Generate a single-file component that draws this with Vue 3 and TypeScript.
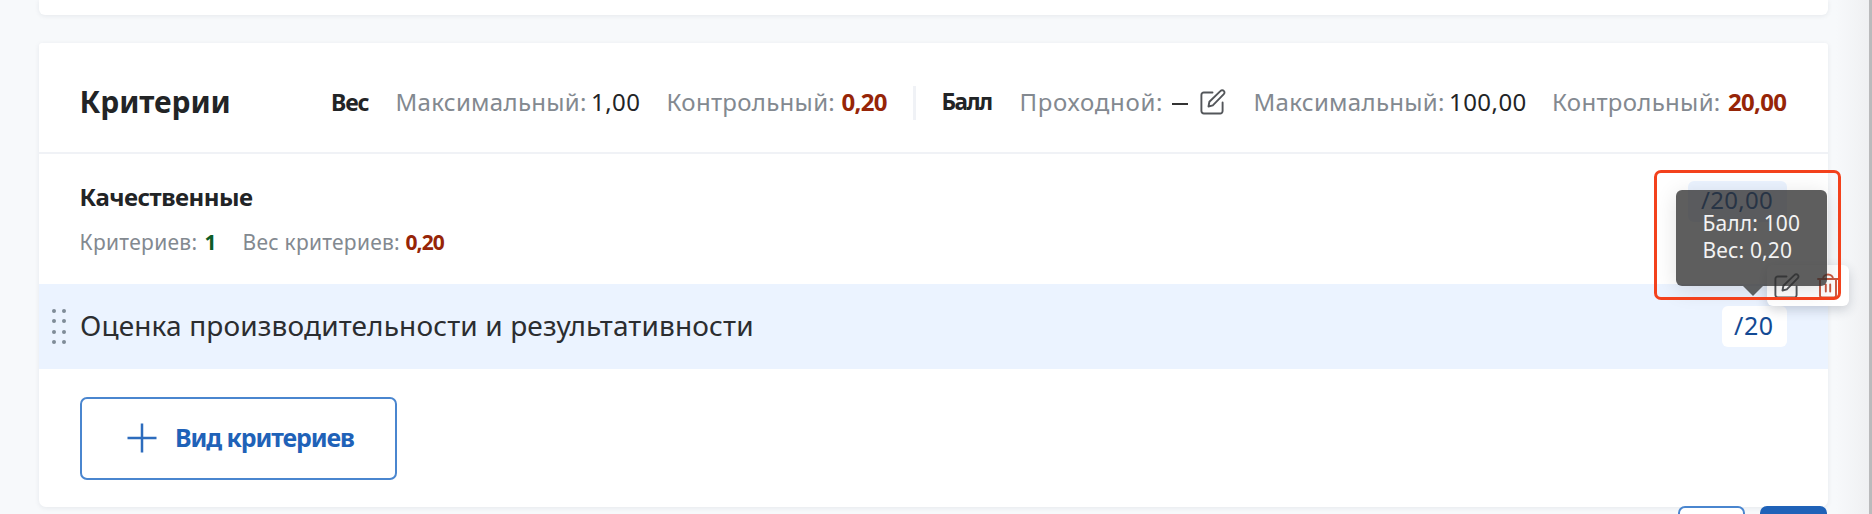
<script setup lang="ts">
interface Cell {
  text: string
  kind: string
}

const weight: Cell[] = [
  { text: 'Вес', kind: 'name name-weight' },
  { text: 'Максимальный:', kind: 'label' },
  { text: '1,00', kind: 'value' },
  { text: 'Контрольный:', kind: 'label' },
  { text: '0,20', kind: 'value alert' },
]
const scoreStart: Cell[] = [
  { text: 'Балл', kind: 'name name-score' },
  { text: 'Проходной:', kind: 'label wide' },
]
const scoreEnd: Cell[] = [
  { text: 'Максимальный:', kind: 'label' },
  { text: '100,00', kind: 'value' },
  { text: 'Контрольный:', kind: 'label' },
  { text: '20,00', kind: 'value alert' },
]
const grip: number[] = [0, 1, 2, 3, 4, 5, 6, 7]
</script>

<template>
  <div class="page">
    <section class="card previous"></section>

    <section class="card main">
      <header class="head">
        <h1 class="title">Критерии</h1>
        <span v-for="(c, i) in weight" :key="'w' + i" :class="c.kind">{{ c.text }}</span>
        <i class="divider"></i>
        <span v-for="(c, i) in scoreStart" :key="'s' + i" :class="c.kind">{{ c.text }}</span>
        <i class="dash"></i>
        <svg class="icon" viewBox="0 0 26 26">
          <path d="M12.500 3.500H3.800A2.400 2.400 0 0 0 1.400 5.900V22.100A2.400 2.400 0 0 0 3.800 24.500H20.200A2.400 2.400 0 0 0 22.600 22.100V13.500" />
          <path d="M8.500 17.500L9.400 12.800L20.600 1.900a2.200 2.200 0 0 1 3.200 0a2.200 2.200 0 0 1 0 3.200L12.800 16.300Z" />
        </svg>
        <span v-for="(c, i) in scoreEnd" :key="'e' + i" :class="c.kind">{{ c.text }}</span>
      </header>

      <div class="group">
        <div>
          <h2 class="group-title">Качественные</h2>
          <p class="stats">
            <span class="count-label">Критериев:</span>
            <b class="ok">1</b>
            <span class="sum-label">Вес критериев:</span>
            <b class="sum">0,20</b>
          </p>
        </div>
        <span class="badge total">/20,00</span>
      </div>

      <div class="row">
        <span class="grip"><i v-for="n in grip" :key="n"></i></span>
        <span class="row-name">Оценка производительности и результативности</span>
        <span class="badge score">/20</span>
      </div>

      <div class="foot">
        <button class="add">
          <svg class="plus" viewBox="0 0 30 30"><path d="M15 .5V29.500M.5 15H29.500" /></svg>
          <span>Вид критериев</span>
        </button>
      </div>
    </section>

    <div class="actions"><i class="ghost"></i><i class="solid"></i></div>
    <div class="edge"></div>

    <div class="tools">
      <svg class="icon" viewBox="0 0 26 26">
        <path d="M12.500 3.500H3.800A2.400 2.400 0 0 0 1.400 5.900V22.100A2.400 2.400 0 0 0 3.800 24.500H20.200A2.400 2.400 0 0 0 22.600 22.100V13.500" />
        <path d="M8.500 17.500L9.400 12.800L20.600 1.900a2.200 2.200 0 0 1 3.200 0a2.200 2.200 0 0 1 0 3.200L12.800 16.300Z" />
      </svg>
      <svg class="icon trash" viewBox="0 0 26 26">
        <path d="M2 6H22M4 6V22.500a2 2 0 0 0 2 2H18a2 2 0 0 0 2-2V6M7 6a5 4.500 0 0 1 10 0M9.800 11.500V18.500M14.200 11.500V18.500" />
      </svg>
    </div>

    <div class="tooltip">
      <div class="tip-score">Балл: 100</div>
      <div class="tip-weight">Вес: 0,20</div>
    </div>
    <div class="marker"></div>
  </div>
</template>

<style>
body {
  margin: 0;
  overflow: hidden;
}
</style>

<style scoped>
.page {
  position: relative;
  box-sizing: border-box;
  width: 1872px;
  height: 514px;
  padding: 0 44px 0 39px;
  overflow: hidden;
  background: #f7f9fb;
  color: #222426;
  font-family: "Noto Sans", "Open Sans", sans-serif;
}
h1, h2, p {
  margin: 0;
}
.card {
  background: #fff;
  box-shadow: 0 1px 5px rgba(30, 40, 60, 0.08);
}
.previous {
  height: 15px;
  margin-bottom: 28px;
  border-radius: 0 0 6px 6px;
}
.main {
  height: 463.5px;
  border-radius: 3px 3px 7px 7px;
}
.head {
  box-sizing: border-box;
  display: grid;
  grid-template-columns: 251.5px 64.5px 195.5px 75.5px 175px 71.5px 28.5px 78px 152px 28px 54px 195.5px 103px 176px 60px;
  align-items: center;
  height: 111px;
  padding: 9px 0 0 40.5px;
  border-bottom: 2px solid #f0f2f6;
  font-size: 24px;
  line-height: 32px;
  white-space: nowrap;
}
.title {
  font-size: 30px;
  font-weight: 700;
  letter-spacing: -0.1px;
}
.name {
  font-weight: 700;
}
.name-weight {
  font-size: 23px;
  letter-spacing: -1.1px;
}
.name-score {
  font-size: 22.5px;
  letter-spacing: -1.5px;
}
.label {
  color: #838990;
  letter-spacing: 0.3px;
}
.label.wide {
  letter-spacing: 0.7px;
}
.value {
  letter-spacing: 0.45px;
}
.value.alert {
  font-weight: 700;
  color: #962507;
  letter-spacing: -0.7px;
}
.divider {
  width: 2.5px;
  height: 34px;
  margin-top: 2px;
  background: #f0f2f6;
}
.dash {
  width: 16px;
  height: 2px;
  margin-top: 4px;
  background: #333;
}
.icon {
  width: 26px;
  height: 26px;
  fill: none;
  stroke: #53565a;
  stroke-width: 1.9;
  stroke-linecap: round;
  stroke-linejoin: round;
}
.group {
  box-sizing: border-box;
  display: flex;
  justify-content: space-between;
  align-items: flex-start;
  height: 130px;
  padding: 27px 41px 0 40.5px;
}
.group-title {
  font-size: 24px;
  line-height: 32px;
  font-weight: 700;
  letter-spacing: -0.5px;
}
.stats {
  display: grid;
  grid-template-columns: 125px 38px 163px 50px;
  margin-top: 15px;
  color: #838990;
  font-size: 21px;
  line-height: 28px;
  white-space: nowrap;
}
.count-label {
  letter-spacing: 0.3px;
}
.sum-label {
  letter-spacing: 0.25px;
}
.ok {
  color: #0d5c26;
}
.sum {
  color: #962507;
  letter-spacing: -0.9px;
}
.badge {
  box-sizing: border-box;
  height: 41px;
  border-radius: 6px;
  line-height: 39px;
  color: #134a94;
}
.total {
  width: 99px;
  padding-left: 13px;
  background: #ebf3ff;
  font-size: 24px;
  line-height: 38px;
  letter-spacing: 0.3px;
}
.row {
  box-sizing: border-box;
  display: flex;
  align-items: center;
  height: 85px;
  padding: 0 41px 0 13px;
  background: #ebf3ff;
}
.grip {
  display: grid;
  grid-template-columns: 4px 4px;
  gap: 6.3px;
  width: 28px;
}
.grip i {
  width: 4px;
  height: 4px;
  border-radius: 50%;
  background: #7f8c98;
}
.row-name {
  flex: 1;
  margin-top: -3px;
  font-size: 28px;
  line-height: 38px;
  letter-spacing: 0.14px;
  color: #2b2d30;
}
.score {
  width: 65px;
  padding-left: 12px;
  background: #fff;
  font-size: 25px;
  letter-spacing: 0.6px;
}
.foot {
  padding: 27.5px 41px;
}
.add {
  box-sizing: border-box;
  display: flex;
  align-items: center;
  width: 317px;
  height: 83px;
  padding: 0 0 0 45px;
  border: 2px solid #4a86cf;
  border-radius: 7px;
  background: #fff;
  color: #1f62b8;
  font-family: inherit;
  font-size: 25px;
  font-weight: 700;
  letter-spacing: -1.1px;
  white-space: nowrap;
}
.add span {
  margin: -3px 0 0 18px;
}
.plus {
  width: 30px;
  height: 30px;
  fill: none;
  stroke: #2d6cbd;
  stroke-width: 2.5;
}
.actions {
  position: absolute;
  top: 505.5px;
  left: 1678px;
  display: flex;
  gap: 15px;
}
.actions i {
  box-sizing: border-box;
  width: 67px;
  height: 40px;
  border: 2px solid #4a86cf;
  border-radius: 7px;
  background: #fff;
}
.actions .solid {
  border-color: #1f62b8;
  background: #1f62b8;
}
.edge {
  position: absolute;
  top: 0;
  right: 0;
  box-sizing: border-box;
  width: 36px;
  height: 514px;
  border-right: 3px solid #bababc;
  background: linear-gradient(90deg, rgba(240, 241, 243, 0), #eff0f2);
}
.tools {
  position: absolute;
  top: 265px;
  left: 1767px;
  box-sizing: border-box;
  display: flex;
  gap: 16px;
  width: 82px;
  height: 41px;
  padding: 8px 0 0 7px;
  border-radius: 6px;
  background: #fff;
  box-shadow: 0 4px 12px rgba(30, 40, 60, 0.2);
}
.tools .icon {
  flex: none;
}
.tools .trash {
  stroke: #c9583f;
}
.tooltip {
  position: absolute;
  top: 190px;
  left: 1676px;
  box-sizing: border-box;
  width: 151px;
  height: 96px;
  padding: 20px 0 0 26.5px;
  border-radius: 6px;
  background: rgba(45, 45, 45, 0.77);
  box-shadow: 0 4px 22px rgba(0, 0, 0, 0.12);
  color: #f2f2f2;
  font-size: 21px;
  line-height: 27px;
  letter-spacing: 0.15px;
}
.tooltip::after {
  content: "";
  position: absolute;
  top: 96px;
  left: 67px;
  border: 10px solid transparent;
  border-top-color: #5c5e60;
  border-bottom: 0;
}
.marker {
  position: absolute;
  top: 170px;
  left: 1654px;
  box-sizing: border-box;
  width: 187px;
  height: 130px;
  border: 3px solid #f3411c;
  border-radius: 7px;
}
</style>
